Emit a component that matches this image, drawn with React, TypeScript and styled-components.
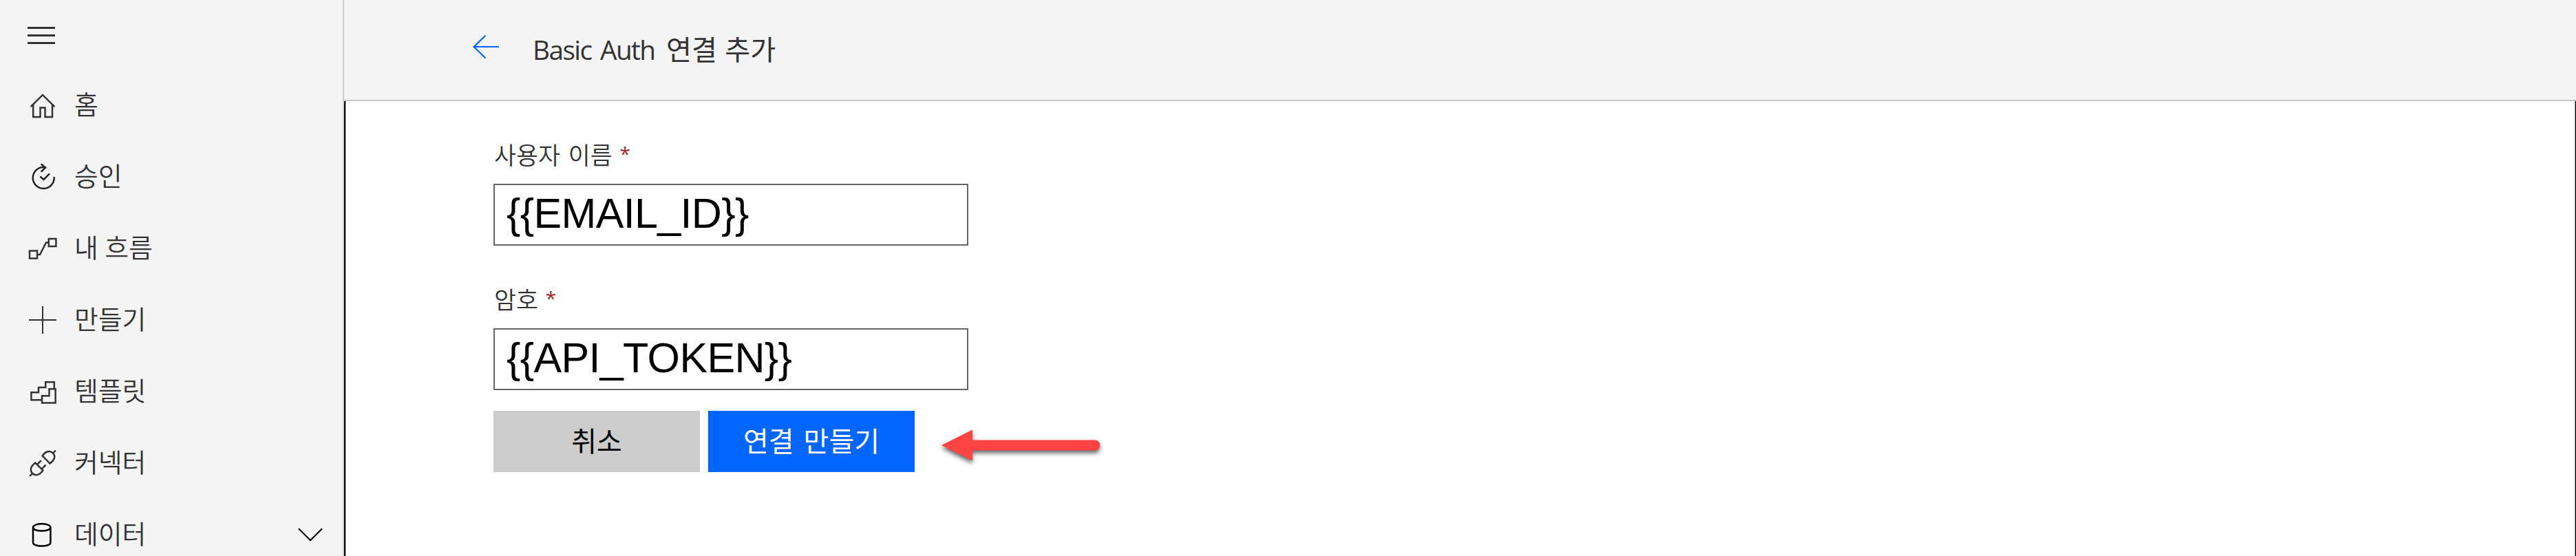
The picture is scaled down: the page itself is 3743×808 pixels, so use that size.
import React from "react";
import styled, { createGlobalStyle } from "styled-components";

const GlobalStyle = createGlobalStyle`
  * { box-sizing: border-box; }
  body {
    margin: 0;
    overflow: hidden;
    background: #ffffff;
    font-family: "Noto Sans CJK KR", sans-serif;
    color: #333333;
  }
`;

const Page = styled.div`
  display: flex;
  height: 808px;
  overflow: hidden;
`;

const Sidebar = styled.nav`
  flex: none;
  width: 500px;
  background: #f4f4f4;
  border-right: 2px solid #cccccc;
`;

const MenuButton = styled.div`
  display: flex;
  flex-direction: column;
  gap: 8px;
  height: 101px;
  padding: 39px 0 0 40px;
`;

const MenuBar = styled.span`
  width: 40px;
  height: 3px;
  background: #333333;
`;

const NavItem = styled.div`
  display: flex;
  align-items: center;
  height: 104px;
  padding: 0 29px 0 38px;
`;

const NavIcon = styled.svg<{ $color?: string; $weight?: number }>`
  flex: none;
  width: 48px;
  height: 48px;
  fill: none;
  stroke: ${(p) => p.$color ?? "#333333"};
  stroke-width: ${(p) => p.$weight ?? 2.5};
`;

const NavLabel = styled.span`
  flex: 1;
  padding-left: 22px;
  padding-bottom: 6px;
  font-size: 37.8px;
  font-weight: 350;
  line-height: 56px;
  white-space: nowrap;
  word-spacing: 1px;
`;

const Chevron = styled.svg`
  flex: none;
  width: 36px;
  height: 20px;
  fill: none;
  stroke: #000000;
  stroke-width: 2.2;
`;

const Main = styled.main`
  display: flex;
  flex: 1;
  flex-direction: column;
`;

const Header = styled.header`
  display: flex;
  align-items: flex-start;
  height: 147px;
  padding-left: 185px;
  background: #f4f4f4;
  border-bottom: 2px solid #c8c8c8;
`;

const BackArrow = styled.svg`
  flex: none;
  width: 42px;
  height: 38px;
  margin-top: 49px;
  fill: none;
  stroke: #0066ff;
  stroke-width: 2.2;
`;

const Title = styled.h1`
  margin: 42px 0 0 47px;
  font-family: "Open Sans", "Noto Sans CJK KR", sans-serif;
  font-size: 40.2px;
  font-weight: 400;
  line-height: 60px;
  white-space: pre;
  word-spacing: 1px;
`;

const TitleService = styled.span`
  margin-right: 5px;
  font-size: 38.8px;
  letter-spacing: -1.6px;
  word-spacing: 4px;
`;

const Content = styled.section`
  display: flex;
  flex: 1;
  border-left: 2px solid #000000;
  border-right: 1px solid #000000;
`;

const Panel = styled.div`
  flex: 1;
  padding: 47px 0 0 214px;
  border-left: 1px solid #c8c8c8;
  border-right: 1px solid #a0a0a0;
`;

const Field = styled.div`
  width: 690px;
  height: 210px;
`;

const Label = styled.div`
  height: 73px;
  padding-left: 1px;
  font-size: 34.8px;
  font-weight: 350;
  line-height: 60px;
  white-space: pre;
  word-spacing: 4px;
`;

const Required = styled.span`
  margin-left: -1px;
  color: #a4262c;
  font-family: "Open Sans", sans-serif;
  font-size: 28px;
  font-weight: 400;
  line-height: 1;
  vertical-align: 5px;
`;

const ValueBox = styled.div`
  height: 90px;
  padding-left: 17px;
  border: 2px solid #666666;
  color: #000000;
  font-family: "Liberation Sans", Arial, sans-serif;
  font-size: 61px;
  letter-spacing: -0.65px;
  line-height: 82px;
`;

const Actions = styled.div`
  display: flex;
  gap: 12px;
  margin-top: -17px;
`;

const Button = styled.button<{ $primary?: boolean }>`
  width: 300px;
  height: 89px;
  padding: 0 0 5px;
  border: 0;
  background: ${(p) => (p.$primary ? "#0066ff" : "#cccccc")};
  color: ${(p) => (p.$primary ? "#ffffff" : "#000000")};
  font-family: "Noto Sans CJK KR", sans-serif;
  font-size: 40px;
  line-height: 84px;
  word-spacing: 5px;
`;

const Pointer = styled.svg`
  flex: none;
  width: 232px;
  height: 46px;
  margin: 27px 0 0 27px;
  fill: #ff4343;
  overflow: visible;
  filter: drop-shadow(0 4px 3px rgba(0, 0, 0, 0.6));
`;

const HomeIcon = () => (
  <NavIcon viewBox="0 0 48 48">
    <path d="M6.6 26.2 24 8.9 41.4 26.2M10.2 23V41H20.5V27.5H27.5V41H38V23" />
  </NavIcon>
);

const ApprovalIcon = () => (
  <NavIcon viewBox="0 0 48 48" $color="#222222" strokeLinecap="round">
    <path d="M27.5 10H25A15.5 15.5 0 1 0 40.7 25M22.5 6 28 10.5 22.5 16M21.2 24.2 25.4 28 33.2 20.2" />
  </NavIcon>
);

const FlowIcon = () => (
  <NavIcon viewBox="0 0 48 48">
    <path d="M5 27.6H16V38.4H5ZM32.8 10H43.4V21H32.8ZM16 33H20L29 15.4H32.8" />
  </NavIcon>
);

const PlusIcon = () => (
  <NavIcon viewBox="0 0 48 48" $weight={2}>
    <path d="M4 24H44M24 4V44" />
  </NavIcon>
);

const TemplateIcon = () => (
  <NavIcon viewBox="0 0 48 48">
    <path d="M22.5 36.2H7.4V25.3H18V18H28.2V10.2H40.8V20M23 40.6V30.2H33.5V20.3H42.6V40.6Z" />
  </NavIcon>
);

const ConnectorIcon = () => (
  <NavIcon viewBox="0 0 48 48">
    <path d="M42.8 5.6 38 10.5M23.6 13.4 34.6 24.6C41 20 43.6 14 38.8 9.3 34 4.8 28 7 23.6 13.4ZM13.4 23.6 24.4 34.6C20 41 13.8 43.6 9.2 39 4.6 34.2 7 28 13.4 23.6ZM16.4 25.6 21.8 20.2M23 32.2 28.6 26.6M9.6 38.4 5.2 43" />
  </NavIcon>
);

const DataIcon = () => (
  <NavIcon viewBox="0 0 48 48" $color="#000000">
    <path d="M10 13.4C10 6.6 35.4 6.6 35.4 13.4S10 20.2 10 13.4V35.4C10 42.2 35.4 42.2 35.4 35.4V13.4" />
  </NavIcon>
);

const items = [
  { label: "홈", Icon: HomeIcon },
  { label: "승인", Icon: ApprovalIcon },
  { label: "내 흐름", Icon: FlowIcon },
  { label: "만들기", Icon: PlusIcon },
  { label: "템플릿", Icon: TemplateIcon },
  { label: "커넥터", Icon: ConnectorIcon },
  { label: "데이터", Icon: DataIcon, expandable: true },
];

const fields = [
  { label: "사용자 이름", value: "{{EMAIL_ID}}" },
  { label: "암호", value: "{{API_TOKEN}}" },
];

export default function App() {
  return (
    <>
      <GlobalStyle />
      <Page>
        <Sidebar>
          <MenuButton>
            <MenuBar />
            <MenuBar />
            <MenuBar />
          </MenuButton>
          {items.map(({ label, Icon, expandable }) => (
            <NavItem key={label}>
              <Icon />
              <NavLabel>{label}</NavLabel>
              {expandable && (
                <Chevron viewBox="0 0 36 20">
                  <path d="M1 1.2 18 18.2 35 1.2" />
                </Chevron>
              )}
            </NavItem>
          ))}
        </Sidebar>
        <Main>
          <Header>
            <BackArrow viewBox="0 0 42 38">
              <path d="M20.5 2.5 3.5 19 20.5 35.5M3.5 19H40" />
            </BackArrow>
            <Title>
              <TitleService>Basic Auth</TitleService> 연결 추가
            </Title>
          </Header>
          <Content>
            <Panel>
              {fields.map(({ label, value }) => (
                <Field key={label}>
                  <Label>
                    {label} <Required>*</Required>
                  </Label>
                  <ValueBox>{value}</ValueBox>
                </Field>
              ))}
              <Actions>
                <Button>취소</Button>
                <Button $primary>연결 만들기</Button>
                <Pointer viewBox="0 0 232 46">
                  <path d="M0 23 45 0.5V15.5H223A7.5 7.5 0 0 1 223 30.5H45V45.5Z" />
                </Pointer>
              </Actions>
            </Panel>
          </Content>
        </Main>
      </Page>
    </>
  );
}
